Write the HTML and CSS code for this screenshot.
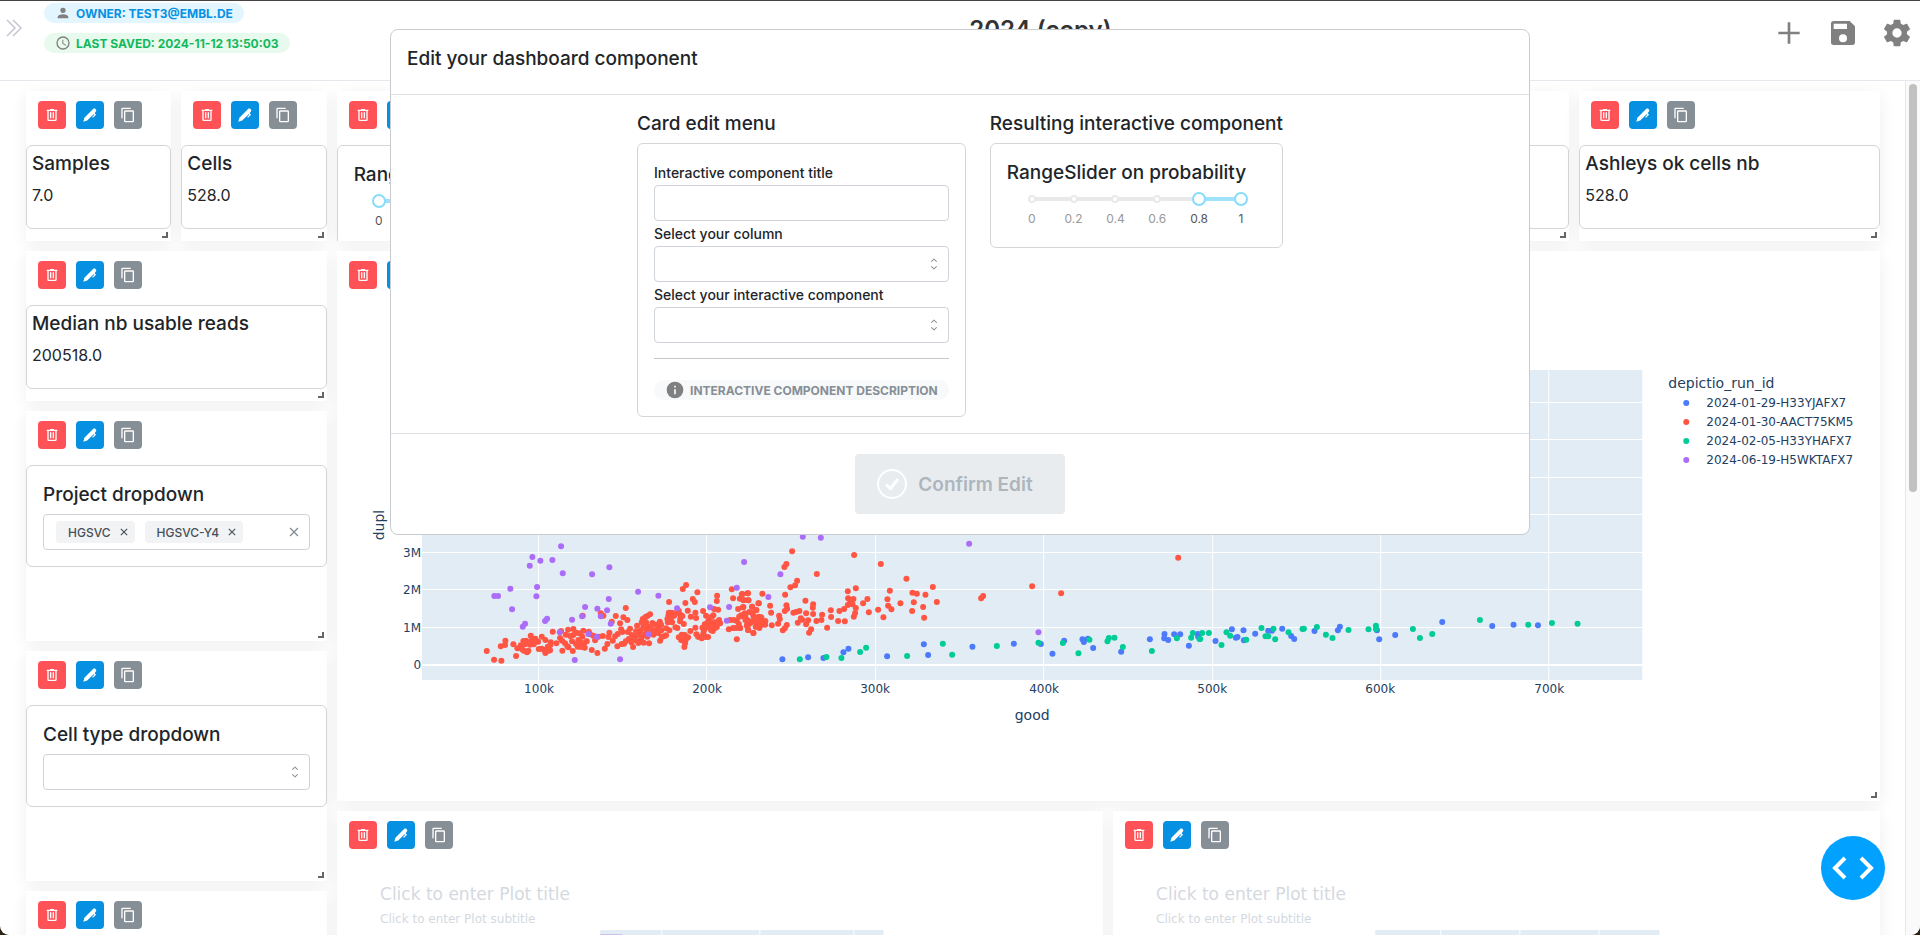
FILE: index.html
```html
<!DOCTYPE html>
<html lang="en">
<head>
<meta charset="utf-8">
<title>2024 (copy)</title>
<link rel="stylesheet" href="styles.css">
</head>
<body>
<svg class="sprite" aria-hidden="true">
  <symbol id="i-trash" viewBox="0 0 24 24"><path d="M15 4V3H9v1H4v2h1v13a2 2 0 0 0 2 2h10a2 2 0 0 0 2-2V6h1V4h-5zm2 15H7V6h10v13zM9 8h2v9H9zm4 0h2v9h-2z"/></symbol>
  <symbol id="i-pen" viewBox="0 0 24 24"><path d="M20.800 6.600c.9-.9.900-2.100 0-3l-.800-.800c-.9-.9-2.100-.9-3 0L3.600 16.200 2 22l5.800-1.600L17.500 10.700l1 1-3.300 3.300 1.300 1.300 4.600-4.600-2.200-2.200 1.900-2.900z"/></symbol>
  <symbol id="i-copy" viewBox="0 0 24 24"><path d="M19 21H8V7h11m0-2H8a2 2 0 0 0-2 2v14a2 2 0 0 0 2 2h11a2 2 0 0 0 2-2V7a2 2 0 0 0-2-2m-3-4H4a2 2 0 0 0-2 2v14h2V3h12z"/></symbol>
  <symbol id="i-updown" viewBox="0 0 15 15"><path d="M4.930 5.430a.45.45 0 0 0 .64 0L7.500 3.500l1.930 1.930a.45.45 0 0 0 .64-.64L7.820 2.550a.45.45 0 0 0-.64 0L4.930 4.800a.45.45 0 0 0 0 .63zm0 4.140a.45.45 0 0 1 .64 0L7.500 11.500l1.930-1.930a.45.45 0 0 1 .64.64l-2.250 2.240a.45.45 0 0 1-.64 0L4.930 10.200a.45.45 0 0 1 0-.63z"/></symbol>
  <symbol id="i-x" viewBox="0 0 10 10"><path d="M1 1l8 8M9 1L1 9" fill="none" stroke="currentColor" stroke-width="1.400"/></symbol>
</svg>

<div class="app">
  <header class="topbar">
    <button class="expand" aria-label="Expand sidebar"><svg viewBox="0 0 16 18"><path d="M1 1l8 8-8 8M7 1l8 8-8 8"/></svg></button>
    <div class="badges">
      <span class="badge badge-owner"><svg viewBox="0 0 24 24"><path d="M12 4a4 4 0 1 1 0 8 4 4 0 0 1 0-8m0 10c4.420 0 8 1.790 8 4v2H4v-2c0-2.210 3.580-4 8-4"/></svg>OWNER: TEST3@EMBL.DE</span>
      <span class="badge badge-saved"><svg viewBox="0 0 24 24"><path d="M12 20a8 8 0 0 0 0-16 8 8 0 0 0 0 16m0-18a10 10 0 1 1 0 20 10 10 0 0 1 0-20m.5 5v5.250l4.500 2.670-.75 1.230L11 13V7z"/></svg>LAST SAVED: 2024-11-12 13:50:03</span>
    </div>
    <h1>2024 (copy)</h1>
    <nav class="actions">
      <button aria-label="Add component"><svg viewBox="0 0 24 24"><path d="M20 13h-7v7h-2v-7H4v-2h7V4h2v7h7z"/></svg></button>
      <button aria-label="Save dashboard"><svg viewBox="0 0 24 24"><path d="M15 9H5V5h10m-3 14a3 3 0 1 1 0-6 3 3 0 0 1 0 6m5-16H5a2 2 0 0 0-2 2v14a2 2 0 0 0 2 2h14a2 2 0 0 0 2-2V7z"/></svg></button>
      <button aria-label="Settings"><svg viewBox="0 0 24 24"><path d="M12 15.500a3.500 3.500 0 1 1 0-7 3.500 3.500 0 0 1 0 7m7.430-2.530c.04-.32.07-.64.07-.97s-.03-.66-.07-1l2.110-1.630c.19-.15.24-.42.12-.64l-2-3.460c-.12-.22-.39-.31-.61-.22l-2.490 1c-.52-.39-1.060-.73-1.690-.98l-.37-2.650A.506.506 0 0 0 14 2h-4c-.25 0-.46.18-.5.42l-.37 2.650c-.63.25-1.170.59-1.690.98l-2.490-1c-.22-.09-.49 0-.61.22l-2 3.460c-.13.22-.07.49.12.64L4.570 11c-.04.34-.07.67-.07 1s.03.65.07.97l-2.110 1.660c-.19.15-.25.42-.12.64l2 3.460c.12.22.39.3.61.22l2.490-1.010c.52.4 1.060.74 1.690.99l.37 2.650c.04.24.25.42.5.42h4c.25 0 .46-.18.5-.42l.37-2.650c.63-.26 1.170-.59 1.690-.99l2.490 1.010c.22.08.49 0 .61-.22l2-3.460c.12-.22.07-.49-.12-.64z"/></svg></button>
    </nav>
  </header>

  <div class="workspace">
    <main class="board">
      <section class="tile w1 h2" data-tile>
        <div class="card metric"><h2>Samples</h2><p>7.0</p></div>
      </section>
      <section class="tile w1 h2" data-tile>
        <div class="card metric"><h2>Cells</h2><p>528.0</p></div>
      </section>
      <section class="tile w4 h2 clip" data-tile>
        <div class="card padded"><h2>RangeSlider on probability</h2><div data-slider="0,1"></div></div>
      </section>
      <section class="tile w4 h2" data-tile>
        <div class="card metric"></div>
      </section>
      <section class="tile w2 h2" data-tile>
        <div class="card metric"><h2>Ashleys ok cells nb</h2><p>528.0</p></div>
      </section>

      <div class="side">
        <section class="tile h2" data-tile>
          <div class="card metric"><h2>Median nb usable reads</h2><p>200518.0</p></div>
        </section>
        <section class="tile h3" data-tile>
          <div class="card padded">
            <h2><label for="project">Project dropdown</label></h2>
            <div class="multi">
              <span class="pill">HGSVC<button aria-label="Remove HGSVC"><svg><use href="#i-x"/></svg></button></span>
              <span class="pill">HGSVC-Y4<button aria-label="Remove HGSVC-Y4"><svg><use href="#i-x"/></svg></button></span>
              <input id="project" type="text">
              <button class="clear" aria-label="Clear"><svg><use href="#i-x"/></svg></button>
            </div>
          </div>
        </section>
        <section class="tile h3" data-tile>
          <div class="card padded">
            <h2><label for="celltype">Cell type dropdown</label></h2>
            <div class="select"><select id="celltype"><option></option></select><svg><use href="#i-updown"/></svg></div>
          </div>
        </section>
        <section class="tile h2" data-tile></section>
      </div>

      <div class="plots">
        <section class="tile w10 h7" data-tile>
          <svg class="chart" id="scatter" viewBox="337 305 1543 440">
            <rect class="plot-bg" x="422" y="370" width="1220" height="310"/>
            <path class="grid-lines" d="M538.500 370v310M706.500 370v310M875.500 370v310M1043.500 370v310M1212.500 370v310M1380.500 370v310M1548.500 370v310M422 402.500h1220M422 439.500h1220M422 477.500h1220M422 514.500h1220M422 552.500h1220M422 589.500h1220M422 627.500h1220"/>
            <path class="zero-line" d="M422 665h1220"/>
            <g id="points"></g>
            <g class="tick end"><text x="421" y="557">3M</text><text x="421" y="594">2M</text><text x="421" y="632">1M</text><text x="421" y="669">0</text></g>
            <g class="tick mid"><text x="539" y="693">100k</text><text x="707" y="693">200k</text><text x="875" y="693">300k</text><text x="1044" y="693">400k</text><text x="1212" y="693">500k</text><text x="1380" y="693">600k</text><text x="1549" y="693">700k</text></g>
            <text class="axis" x="1032" y="720">good</text>
            <text class="axis" x="384" y="525" transform="rotate(-90 384 525)">dupl</text>
            <text class="legend-title" x="1668" y="388">depictio_run_id</text>
            <g class="tick"><circle class="s-blue" cx="1686" cy="403" r="3"/><text x="1706" y="407">2024-01-29-H33YJAFX7</text><circle class="s-red" cx="1686" cy="422" r="3"/><text x="1706" y="426">2024-01-30-AACT75KM5</text><circle class="s-green" cx="1686" cy="441" r="3"/><text x="1706" y="445">2024-02-05-H33YHAFX7</text><circle class="s-purple" cx="1686" cy="460" r="3"/><text x="1706" y="464">2024-06-19-H5WKTAFX7</text></g>
          </svg>
        </section>
        <section class="tile w5 h7" data-tile>
          <svg class="chart" viewBox="337 865 766 440">
            <text class="hint-title" x="380" y="900">Click to enter Plot title</text>
            <text class="hint-sub" x="380" y="923">Click to enter Plot subtitle</text>
            <rect class="plot-bg" x="600" y="930" width="283" height="310"/>
            <path class="grid-lines" d="M661.500 930v310M759.500 930v310M853.500 930v310"/>
            <rect class="bar" x="600" y="934" width="22" height="20"/>
          </svg>
        </section>
        <section class="tile w5 h7" data-tile>
          <svg class="chart" viewBox="1113 865 766 440">
            <text class="hint-title" x="1156" y="900">Click to enter Plot title</text>
            <text class="hint-sub" x="1156" y="923">Click to enter Plot subtitle</text>
            <rect class="plot-bg" x="1375" y="930" width="284" height="310"/>
            <path class="grid-lines" d="M1440.500 930v310M1519.500 930v310M1598.500 930v310"/>
          </svg>
        </section>
      </div>
    </main>
    <div class="scrollbar"><div class="thumb"></div></div>
  </div>

  <div class="modal" role="dialog" aria-labelledby="modal-title">
    <header class="modal-head"><h2 id="modal-title">Edit your dashboard component</h2></header>
    <div class="modal-body">
      <div>
        <h3>Card edit menu</h3>
        <div class="card padded form">
          <label for="f-title">Interactive component title</label>
          <input class="field" id="f-title" type="text">
          <label for="f-col">Select your column</label>
          <div class="select"><select id="f-col"><option></option></select><svg><use href="#i-updown"/></svg></div>
          <label for="f-comp">Select your interactive component</label>
          <div class="select"><select id="f-comp"><option></option></select><svg><use href="#i-updown"/></svg></div>
          <hr>
          <span class="badge badge-info"><svg viewBox="0 0 24 24"><path d="M13 9h-2V7h2m0 10h-2v-6h2m-1-9a10 10 0 1 0 0 20 10 10 0 0 0 0-20"/></svg>INTERACTIVE COMPONENT DESCRIPTION</span>
        </div>
      </div>
      <div>
        <h3>Resulting interactive component</h3>
        <div class="card padded"><h2>RangeSlider on probability</h2><div data-slider="0.8,1"></div></div>
      </div>
    </div>
    <footer class="modal-foot">
      <button class="confirm" disabled><svg viewBox="0 0 30 30"><circle cx="15" cy="15" r="14"/><path d="M9 15.500l4.500 4 7.500-9.500"/></svg>Confirm Edit</button>
    </footer>
  </div>

  <button class="devtools" aria-label="Debug menu"><svg viewBox="0 0 42 24"><path d="M13 2L3 12l10 10M29 2l10 10-10 10"/></svg></button>
</div>
<script src="script.js"></script>
</body>
</html>
```
FILE: styles.css
```css
* { box-sizing: border-box; }
body {
  margin: 0;
  background: #2b2013;
  font-family: Inter, "Liberation Sans", sans-serif;
  color: #212529;
}
h1, h2, h3, p { margin: 0; }
button { font: inherit; padding: 0; border: 0; background: none; color: inherit; }
.sprite { position: absolute; width: 0; height: 0; }

.app {
  position: relative;
  display: flex;
  flex-direction: column;
  height: 100vh;
  overflow: hidden;
  background: #fff;
  border-top: 1px solid #444;
  border-radius: 0 0 9px 9px;
}

/* top bar */
.topbar {
  display: flex;
  align-items: flex-start;
  flex: none;
  height: 80px;
  padding: 2px 7px 2px 6px;
  border-bottom: 1px solid #e4e8ec;
}
.expand { width: 18px; height: 18px; margin-top: 16px; }
.expand svg { display: block; width: 16px; height: 18px; fill: none; stroke: #c3c6d1; stroke-width: 1.5; }
.badges { display: flex; flex-direction: column; align-items: flex-start; gap: 10px; margin-left: 20px; width: 250px; }
.badge {
  display: inline-flex;
  align-items: center;
  gap: 5px;
  height: 20px;
  padding: 0 11px;
  border-radius: 10px;
  font-size: 12px;
  font-weight: 700;
  white-space: nowrap;
}
.badge svg { width: 16px; height: 16px; fill: #808080; flex: none; }
.badge-owner { background: #e3f5ff; color: #0891e2; }
.badge-saved { background: #e8faee; color: #12b95c; }
.badge-info { background: #f8f9fa; color: #868e96; }
.badge-info svg { width: 20px; height: 20px; }
.topbar h1 {
  flex: 1;
  margin-top: 11px;
  padding-left: 14px;
  text-align: center;
  font-size: 24px;
  font-weight: 600;
  line-height: 32px;
  color: #333;
}
.actions { display: flex; gap: 22px; margin-top: 14px; }
.actions button { width: 32px; height: 32px; }
.actions svg { display: block; width: 32px; height: 32px; fill: #808080; }

/* dashboard grid */
.workspace { flex: 1; display: flex; min-height: 0; }
.board {
  flex: 1;
  display: grid;
  grid-template-columns: repeat(12, 1fr);
  grid-auto-rows: 70px;
  gap: 10px;
  padding: 10px 25px 0 26px;
  overflow: hidden;
}
.side { grid-column: span 2; grid-row: span 14; display: grid; grid-auto-rows: 70px; gap: 10px; }
.plots { grid-column: span 10; grid-row: span 14; display: grid; grid-template-columns: repeat(10, 1fr); grid-auto-rows: 70px; gap: 10px; }
.w1 { grid-column: span 1; }
.w2 { grid-column: span 2; }
.w4 { grid-column: span 4; }
.w5 { grid-column: span 5; }
.w10 { grid-column: span 10; }
.h2 { grid-row: span 2; }
.h3 { grid-row: span 3; }
.h7 { grid-row: span 7; }

.tile {
  position: relative;
  min-width: 0;
  background: #fff;
  box-shadow: 0 4px 16px rgba(0, 25, 15, .065);
}
.clip { overflow: hidden; }
.tools { display: flex; gap: 10px; padding: 10px 12px 16px; }
.tools button { display: grid; place-items: center; width: 28px; height: 28px; border-radius: 4px; }
.tools svg { width: 16px; height: 16px; fill: #fff; }
.tools .del { background: #ff5257; }
.tools .edit { background: #0590e2; }
.tools .dup { background: #868e96; }
.grip {
  position: absolute;
  right: 3px;
  bottom: 3px;
  width: 6px;
  height: 6px;
  border: solid #666;
  border-width: 0 2px 2px 0;
}

.card { background: #fff; border: 1px solid #d3d5d7; border-radius: 6px; }
.card h2, .modal h2, .modal h3 { font-size: 19px; font-weight: 500; line-height: 26px; white-space: nowrap; }
.metric { height: 84px; padding: 5px; }
.metric p { margin-top: 6px; font-size: 16px; line-height: 24px; }
.padded { padding: 16px; }
.padded h2 + .multi, .padded h2 + .select { margin-top: 6px; }

/* form controls */
.field, .select select, .multi {
  display: block;
  width: 100%;
  height: 36px;
  padding: 0 12px;
  border: 1px solid #ced4da;
  border-radius: 4px;
  background: #fff;
  appearance: none;
}
.select { position: relative; }
.select svg { position: absolute; right: 7px; top: 10px; width: 16px; height: 16px; fill: #868e96; pointer-events: none; }
.multi { display: flex; align-items: center; gap: 10px; padding-right: 8px; }
.pill {
  display: flex;
  align-items: center;
  gap: 9px;
  height: 22px;
  padding: 0 7px 0 12px;
  border-radius: 4px;
  background: #f1f3f5;
  color: #495057;
  font-size: 12px;
  font-weight: 500;
  white-space: nowrap;
}
.pill svg { display: block; width: 8px; height: 8px; }
.multi input { flex: 1; min-width: 0; border: 0; outline: 0; }
.clear { padding: 2px; color: #868e96; }
.clear svg { display: block; width: 10px; height: 10px; }

/* two-handle slider */
.slider { height: 45px; padding: 11px 25px 0; }
.rail { position: relative; height: 4px; border-radius: 2px; background: #e9e9e9; }
.fill { position: absolute; top: 0; height: 4px; background: #9fe2fb; }
.dot { position: absolute; top: -2px; width: 8px; height: 8px; margin-left: -4px; border: 2px solid #e9e9e9; border-radius: 50%; background: #fff; }
.rail input {
  position: absolute;
  top: -5px;
  left: -7px;
  width: calc(100% + 14px);
  height: 14px;
  margin: 0;
  appearance: none;
  background: none;
  pointer-events: none;
}
.rail input::-webkit-slider-thumb {
  appearance: none;
  width: 14px;
  height: 14px;
  border: 2px solid #86dcfa;
  border-radius: 50%;
  background: #fff;
  pointer-events: auto;
}
.marks { display: flex; justify-content: space-between; margin-top: 9px; font-size: 12px; line-height: 18px; color: #999; }
.marks span { display: flex; justify-content: center; width: 0; }
.marks .on { color: #555; }

/* charts */
.chart { display: block; width: 100%; overflow: hidden; font-family: "DejaVu Sans", Verdana, sans-serif; }
.plot-bg { fill: #e2ecf5; }
.grid-lines { stroke: #fff; fill: none; }
.zero-line { stroke: #fff; stroke-width: 2; }
.tick text { font-size: 12px; fill: #24405f; }
.end { text-anchor: end; }
.mid, .axis { text-anchor: middle; }
.axis, .legend-title { font-size: 14px; fill: #24405f; }
.s-blue { fill: #4b7afa; }
.s-red { fill: #ff5542; }
.s-green { fill: #00cc97; }
.s-purple { fill: #ab6cf8; }
.bar { fill: #cdbdf3; }
.hint-title { font-size: 17px; fill: #d4d9df; }
.hint-sub { font-size: 12px; fill: #d4d9df; }

.scrollbar { width: 15px; padding: 3px 2px 3px 3px; background: #fafafa; border-left: 1px solid #e8e8e8; }
.thumb { width: 8px; height: 408px; border-radius: 4px; background: #c1c1c1; }

/* edit dialog */
.modal {
  position: absolute;
  top: 28px;
  left: 50%;
  width: 1140px;
  transform: translateX(-50%);
  background: #fff;
  border: 1px solid #c8ccd0;
  border-radius: 8px;
}
.modal-head { padding: 16px 16px 22px; border-bottom: 1px solid #dee2e6; }
.modal-body { display: flex; justify-content: center; align-items: flex-start; gap: 24px; padding: 16px; }
.modal h3 { margin-bottom: 6px; }
.form label { display: block; font-size: 14px; font-weight: 500; line-height: 25px; }
.form hr { margin: 15px 0 21px; border: 0; border-top: 1px solid #c4c6c8; }
.form .badge { display: flex; }
.modal-foot { display: flex; justify-content: center; padding: 20px; border-top: 1px solid #dee2e6; }
.confirm {
  display: flex;
  align-items: center;
  gap: 11px;
  height: 60px;
  padding: 0 32px 0 22px;
  border-radius: 4px;
  background: #e9ecef;
  color: #adb5bd;
  font-size: 19px;
  font-weight: 600;
}
.confirm svg { width: 30px; height: 30px; fill: none; stroke: #fff; stroke-width: 2; }
.confirm path { stroke-width: 3; }

.devtools {
  position: absolute;
  right: 35px;
  bottom: 35px;
  display: grid;
  place-items: center;
  width: 64px;
  height: 64px;
  border-radius: 50%;
  background: #00a1ff;
}
.devtools svg { width: 42px; height: 24px; fill: none; stroke: #fff; stroke-width: 4; }
```
FILE: script.js
```js
// Toolbar and resize grip shared by every tile
document.querySelectorAll('[data-tile]').forEach(function (tile) {
  tile.insertAdjacentHTML('afterbegin',
    '<div class="tools">' +
    '<button class="del" aria-label="Delete"><svg><use href="#i-trash"/></svg></button>' +
    '<button class="edit" aria-label="Edit"><svg><use href="#i-pen"/></svg></button>' +
    '<button class="dup" aria-label="Duplicate"><svg><use href="#i-copy"/></svg></button></div>');
  tile.insertAdjacentHTML('beforeend', '<span class="grip"></span>');
});

// Range sliders
document.querySelectorAll('[data-slider]').forEach(function (host) {
  var range = host.dataset.slider.split(',').map(Number);
  var marks = [0, 0.2, 0.4, 0.6, 0.8, 1];
  host.className = 'slider';
  host.innerHTML = '<div class="rail"><div class="fill" style="left:' + range[0] * 100 + '%;width:' + (range[1] - range[0]) * 100 + '%"></div>' +
    marks.map(function (m) { return '<span class="dot" style="left:' + m * 100 + '%"></span>'; }).join('') +
    range.map(function (v, i) { return '<input type="range" min="0" max="1" step="0.01" value="' + v + '" aria-label="' + (i ? 'Maximum' : 'Minimum') + '">'; }).join('') +
    '</div><div class="marks">' +
    marks.map(function (m) { return '<span' + (m >= range[0] && m <= range[1] ? ' class="on"' : '') + '>' + m + '</span>'; }).join('') + '</div>';
});

// Scatter series, in thirds of a plot unit; each run starts at its own x origin
var series = [
  { name: 'blue', runs: [
    [740, '127,478 204,472 250,474 310,457 325,446 441,469 551,433 564,465 697,440 821,431 902,432 937,461 972,422 1027,418 1043,416 1031,426 1059,444 1143,455 1229,418 1273,402 1272,415 1284,420 1302,403 1320,403 1346,437 1373,402 1374,410'],
    [1200, '46,423 95,388 107,413 112,411 130,391 131,421 165,401 204,392 215,392 246,386 273,408 282,417 343,393 413,391 419,380 530,391 537,418 585,405 726,366 876,378 940,374 1013,376']] },
  { name: 'red', runs: [
    [360, '380,453 402,479 424,482 422,439 436,422 435,435 460,433 468,468 472,445 482,436 486,448 490,423 491,452 495,433 498,422 501,457 505,452 510,434 512,407 514,422 517,430 521,433 526,416 534,425 536,447 545,410 545,446 556,420 556,459 552,450 563,440 566,452 571,435 570,451 572,427 578,395 589,430 600,414 603,393 606,422 607,452 615,430 617,404 622,439 624,389 625,442 630,408 636,424 638,453 640,387 640,405 648,398 648,432 653,440 655,420 658,400 662,427 663,441 667,410 668,347 670,392 672,430 674,443 680,424 686,395 690,403 695,450 700,407 705,421 712,459 715,410 722,340 728,408 730,347 734,446 742,432 745,411 748,398 755,365 758,422 765,409 767,348 772,439 773,402 780,370 783,388 785,432 787,396 790,352 792,431 797,324 797,424 802,360 803,396 806,417 810,386 814,427 815,405 819,441 820,421 825,410 828,394 831,377 833,424 835,429 837,404 842,391 844,416 845,367 848,357 850,380 851,428 853,404 856,351 858,367 860,393 862,348 862,410 865,380 867,430 870,343 870,399 873,385 877,391 877,369 880,404 884,399 887,374 890,390 893,380 895,399 899,365 900,422 903,374 905,411 904,391 912,409 918,406 918,385 922,357 923,367 925,347 926,338 927,306 928,391 933,338 933,355 936,367 939,339 942,347 946,382 952,384 954,340 956,333 956,412 960,364 961,355 962,345 963,420 965,404 967,348 968,267 970,422 971,372 973,441 974,405 975,430 976,309 978,255 977,419 983,332 984,412 991,393 992,350 998,297 1004,306 1006,338 1006,383 1008,354 1009,403 1012,277 1014,410 1020,412 1025,415 1027,383 1029,333 1030,400 1032,391 1034,373 1036,411 1038,347 1040,382 1042,368 1044,411 1046,359 1048,378 1052,370 1053,391 1055,350 1058,393 1058,377 1060,346 1062,367 1062,327 1065,384 1067,374 1070,303 1070,381 1071,287 1073,365 1074,329 1077,360 1080,370 1106,388 1110,360 1115,268 1119,295 1119,384 1121,360 1128,384 1130,418 1130,363 1134,327 1136,372 1137,350 1139,296 1140,384 1143,346 1147,282 1150,321 1151,300 1156,347 1160,377 1163,280 1163,361 1165,301 1164,390 1171,369 1176,320 1177,339 1180,399 1182,351 1183,362 1187,380 1188,331 1195,310 1196,350 1198,384'],
    [740, '5,283 23,280 10,301 25,301 8,322 36,320 49,330 56,310 67,281 14,340 28,336 40,347 5,349 16,360 37,364 24,376 24,390 40,399 0,384 50,365 64,352 60,362 76,363 47,380 55,379 65,374 75,374 22,370 12,345 52,357 90,317 93,338 95,376 117,347 119,357 114,371 128,391 134,385 140,375 135,284 139,316 141,326 134,333 133,201 139,192 156,154 171,242 165,256 151,262 160,338 168,336 178,333 182,355 173,368 186,359 196,302 198,340 198,373 204,361 219,313 218,323 219,342 207,398 213,388 230,222 229,363 246,344 244,360 261,383 272,331 273,351 294,363 298,333 312,327 314,364 323,274 347,265 324,295 340,297 323,315 337,313 347,324 345,339 341,350 331,306 342,165 369,310 382,297 386,337 414,329 422,192 430,352 449,272 442,298 444,317 454,328 481,310 499,236 517,278 530,281 556,284 521,307 549,321 516,333 552,353 578,261 590,306 723,295 729,288 876,259 963,280 1314,173']] },
  { name: 'green', runs: [
    [740, '179,478 259,471 304,474 360,456 378,443 501,468 608,431 636,464 770,438 895,428 968,429 1015,460 1048,419 1102,424 1106,414 1123,413 1148,441 1235,453 1310,415 1358,399 1353,413 1378,417'],
    [1200, '6,399 26,399 0,417 64,435 79,397 90,407 138,419 184,384 220,386 196,409 204,409 225,418 265,397 307,387 311,386 350,381 377,404 397,414 445,390 505,388 527,377 527,387 638,387 659,414 696,402 839,360 984,374 1055,369 1132,371']] },
  { name: 'purple', runs: [
    [360, '603,139 517,171 541,182 577,180 509,197 608,220 696,223 748,202 451,266 531,261 403,288 414,288 529,289 456,328 834,275 746,297 895,287 675,321 712,326 741,331 666,349 722,349 752,371 636,359 555,363 561,356 488,380 495,371 599,397 685,402 710,410 866,403 644,480 780,478 951,325 1050,322 1107,321 1100,362 1130,263 1152,186'],
    [740, '121,223 85,291 188,110 242,113 687,131 895,397']] }
];
document.getElementById('points').innerHTML = series.map(function (s) {
  return '<g class="s-' + s.name + '">' + s.runs.map(function (run) {
    return run[1].split(' ').map(function (p) {
      var c = p.split(',');
      return '<circle cx="' + (run[0] + c[0] / 3).toFixed(1) + '" cy="' + (500 + c[1] / 3).toFixed(1) + '" r="3"/>';
    }).join('');
  }).join('') + '</g>';
}).join('');
```
